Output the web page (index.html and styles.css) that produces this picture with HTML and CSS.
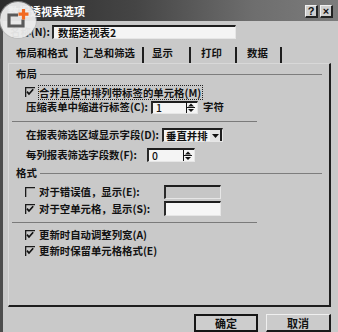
FILE: index.html
```html
<!DOCTYPE html>
<html>
<head>
<meta charset="utf-8">
<link rel="stylesheet" href="styles.css">
</head>
<body>
<div class="win">
  <div class="titlebar">
    <span class="title">数据透视表选项</span>
    <span class="tb-btns"><span class="tb-btn">?</span><span class="tb-btn">×</span></span>
  </div>
  <div class="namerow">
    <span class="name-label">名称(N):</span>
    <span class="field name-input">数据透视表2</span>
  </div>
  <div class="tabs">
    <span class="tab t1">布局和格式</span>
    <span class="tab t2">汇总和筛选</span>
    <span class="tab t3">显示</span>
    <span class="tab t4">打印</span>
    <span class="tab t5">数据</span>
  </div>
  <div class="panel">
    <div class="head h-layout"><span>布局</span><i class="hline"></i></div>
    <div class="row r-merge">
      <svg class="cb" width="10" height="10" viewBox="0 0 10 10"><path d="M0.5 10V0.5H10" fill="none" stroke="#1a1a1a" stroke-width="1.6"/><path d="M2 4.6L4 7L8.2 2.2" fill="none" stroke="#111" stroke-width="1.7"/></svg>
      <span class="focus">合并且居中排列带标签的单元格(M)</span>
    </div>
    <div class="row r-compress">
      <span class="lbl w-compress">压缩表单中缩进行标签(C):</span>
      <span class="field spin f-compress">1<svg class="spinner" width="10" height="11" viewBox="0 0 10 11"><path d="M2 4.5L5 1.5L8 4.5Z" fill="#111"/><path d="M1 5.5H9" stroke="#111" stroke-width="1"/><path d="M2 7L5 10L8 7Z" fill="#111"/><path d="M0.5 0V11" stroke="#111" stroke-width="1"/></svg></span>
      <span class="unit">字符</span>
    </div>
    <div class="sep s1"></div>
    <div class="row r-select">
      <span class="lbl w-select">在报表筛选区域显示字段(D):</span>
      <span class="field sel">垂直并排<span class="dd"><svg width="7" height="4" viewBox="0 0 7 4"><path d="M0 0H7L3.5 4Z" fill="#111"/></svg></span></span>
    </div>
    <div class="row r-cols">
      <span class="lbl w-cols">每列报表筛选字段数(F):</span>
      <span class="field spin f-cols">0<svg class="spinner" width="10" height="11" viewBox="0 0 10 11"><path d="M2 4.5L5 1.5L8 4.5Z" fill="#111"/><path d="M1 5.5H9" stroke="#111" stroke-width="1"/><path d="M2 7L5 10L8 7Z" fill="#111"/><path d="M0.5 0V11" stroke="#111" stroke-width="1"/></svg></span>
    </div>
    <div class="head h-format"><span>格式</span><i class="hline"></i></div>
    <div class="row r-err">
      <svg class="cb" width="10" height="10" viewBox="0 0 10 10"><path d="M0.5 10V0.5H10" fill="none" stroke="#1a1a1a" stroke-width="1.6"/></svg>
      <span class="lbl w-cbl">对于错误值，显示(E):</span>
      <span class="field f-err disabled"></span>
    </div>
    <div class="row r-empty">
      <svg class="cb" width="10" height="10" viewBox="0 0 10 10"><path d="M0.5 10V0.5H10" fill="none" stroke="#1a1a1a" stroke-width="1.6"/><path d="M2 4.6L4 7L8.2 2.2" fill="none" stroke="#111" stroke-width="1.7"/></svg>
      <span class="lbl w-cbl">对于空单元格，显示(S):</span>
      <span class="field f-empty"></span>
    </div>
    <div class="sep s2"></div>
    <div class="row r-auto">
      <svg class="cb" width="10" height="10" viewBox="0 0 10 10"><path d="M0.5 10V0.5H10" fill="none" stroke="#1a1a1a" stroke-width="1.6"/><path d="M2 4.6L4 7L8.2 2.2" fill="none" stroke="#111" stroke-width="1.7"/></svg>
      <span>更新时自动调整列宽(A)</span>
    </div>
    <div class="row r-keep">
      <svg class="cb" width="10" height="10" viewBox="0 0 10 10"><path d="M0.5 10V0.5H10" fill="none" stroke="#1a1a1a" stroke-width="1.6"/><path d="M2 4.6L4 7L8.2 2.2" fill="none" stroke="#111" stroke-width="1.7"/></svg>
      <span>更新时保留单元格格式(E)</span>
    </div>
  </div>
  <div class="buttons">
    <span class="btn ok">确定</span>
    <span class="btn cancel">取消</span>
  </div>
  <div class="logo">
    <svg width="36" height="36" viewBox="0 0 36 36">
      <path d="M18 13H9V24H23V17.5" fill="none" stroke="#5a5a5a" stroke-width="3.2"/>
      <path d="M23.5 7V17.5M18.5 12.2H28.5" stroke="#f26a21" stroke-width="3.2"/>
    </svg>
  </div>
</div>
</body>
</html>
```
FILE: styles.css
```css
* { box-sizing: border-box; }
body {
  margin: 0;
  width: 338px;
  height: 332px;
  overflow: hidden;
  background: #c9c9c9;
  font-family: "Noto Sans CJK SC", "Noto Sans", sans-serif;
  font-size: 10.4px;
  font-weight: 600;
  color: #111;
  white-space: nowrap;
}
.win {
  position: relative;
  width: 338px;
  height: 332px;
  background: #c9c9c9;
  box-shadow: inset 3px 0 0 #4d4d4d;
  overflow: hidden;
}
.titlebar {
  height: 21px;
  display: flex;
  align-items: center;
  padding-left: 8px;
  background: linear-gradient(90deg, #2b2b2b 0%, #454545 40%, #6e6e6e 75%, #7c7c7c 100%);
}
.title {
  color: #fff;
  font-weight: 700;
  font-size: 11px;
  line-height: 14px;
}
.tb-btns {
  margin-left: auto;
  display: flex;
  gap: 2px;
  padding-right: 5px;
  margin-top: 2px;
}
.tb-btn {
  width: 13px;
  height: 13px;
  background: #cfcfcf;
  border-top: 1px solid #f0f0f0;
  border-left: 1px solid #f0f0f0;
  border-right: 2px solid #222;
  border-bottom: 2px solid #222;
  font-family: "Liberation Sans", sans-serif;
  font-weight: 700;
  font-size: 11px;
  line-height: 10px;
  text-align: center;
  color: #111;
}
.namerow {
  margin-top: 4px;
  height: 14px;
  display: flex;
  align-items: center;
  padding-left: 10px;
}
.name-label { width: 42px; line-height: 14px; flex: none; }
.field {
  display: flex;
  align-items: center;
  flex: none;
  height: 14px;
  background: #f4f4f4;
  border-top: 2px solid #1e1e1e;
  border-left: 2px solid #2a2a2a;
  border-right: 1px solid #e6e6e6;
  border-bottom: 1px solid #e6e6e6;
  padding-left: 3px;
  line-height: 11px;
  font-weight: 500;
}
.name-input { width: 184px; padding-left: 4px; font-weight: 600; }
.tabs {
  margin-top: 5px;
  height: 19px;
  display: flex;
  align-items: flex-end;
  padding-left: 8px;
}
.tab {
  height: 16px;
  line-height: 12px;
  border-right: 2px solid #1e1e1e;
}
.t1 { width: 70px; padding-left: 8px; }
.t2 { width: 66px; padding-left: 5px; }
.t3 { width: 47px; padding-left: 8px; }
.t4 { width: 46px; padding-left: 10px; }
.t5 { width: 45px; padding-left: 10px; }
.panel {
  margin-left: 8px;
  width: 323px;
  height: 244px;
  border-right: 2px solid #1e1e1e;
  border-bottom: 2px solid #1e1e1e;
  border-left: 1px solid #dadada;
  border-top: 1px solid #d8d8d8;
  display: flex;
  flex-direction: column;
}
.head {
  height: 14px;
  display: flex;
  align-items: center;
  padding-left: 7px;
  padding-right: 7px;
  line-height: 14px;
}
.hline {
  flex: 1;
  height: 1px;
  margin-left: 3px;
  background: #7d7d7d;
}
.h-layout { margin-top: 3px; }
.h-format { margin-top: 4px; }
.row {
  height: 14px;
  display: flex;
  align-items: center;
  padding-left: 16px;
  line-height: 14px;
}
.cb { flex: none; margin-right: 4px; }
.focus {
  outline: 1px dotted #222;
  outline-offset: 0;
  line-height: 13px;
  padding: 0 1px 0 0;
}
.r-merge { margin-top: 4px; padding-left: 16px; }
.r-compress { margin-top: 1px; padding-left: 17px; }
.lbl { flex: none; }
.w-compress { width: 125px; }
.w-select { width: 136px; }
.w-cols { width: 121px; }
.w-cbl { width: 125px; }
.spin { justify-content: space-between; padding-right: 1px; }
.f-compress { width: 47px; height: 13px; }
.f-cols { width: 48px; }
.spinner { flex: none; }
.unit { margin-left: 5px; }
.sep {
  height: 1px;
  background: #7a7a7a;
  margin-left: 3px;
  width: 245px;
}
.s1 { margin-top: 7px; }
.s2 { margin-top: 6px; }
.r-select { margin-top: 6px; padding-left: 17px; }
.sel {
  width: 61px;
  padding-left: 2px;
  padding-right: 0;
  justify-content: space-between;
  font-weight: 600;
}
.dd {
  width: 12px;
  height: 100%;
  display: flex;
  align-items: center;
  justify-content: center;
  background: #e4e4e4;
  border-right: 2px solid #1e1e1e;
}
.r-cols { margin-top: 6px; padding-left: 17px; }
.r-err { margin-top: 5px; }
.f-err { width: 57px; height: 14px; }
.disabled { background: #c6c6c6; }
.r-empty { margin-top: 2px; height: 15px; }
.f-empty { width: 57px; height: 15px; background: #f6f6f6; }
.r-auto { margin-top: 5px; }
.r-keep { margin-top: 2px; }
.buttons {
  margin-top: 7px;
  height: 18px;
  display: flex;
  justify-content: flex-end;
  gap: 8px;
  padding-right: 7px;
}
.btn {
  height: 18px;
  display: flex;
  align-items: center;
  justify-content: center;
  font-weight: 700;
  font-size: 11px;
  line-height: 12px;
}
.ok {
  width: 64px;
  border: 2px solid #151515;
  background: #cdcdcd;
}
.cancel {
  width: 65px;
  border-top: 1px solid #efefef;
  border-left: 1px solid #efefef;
  border-right: 2px solid #1a1a1a;
  border-bottom: 2px solid #1a1a1a;
  background: #cbcbcb;
}
.logo {
  position: absolute;
  left: 0;
  top: 2px;
  width: 36px;
  height: 36px;
  border-radius: 50%;
  background: rgba(236, 236, 236, 0.95);
  box-shadow: 0 0 0 1px rgba(180, 180, 180, 0.6);
}
.logo svg { display: block; }
```
